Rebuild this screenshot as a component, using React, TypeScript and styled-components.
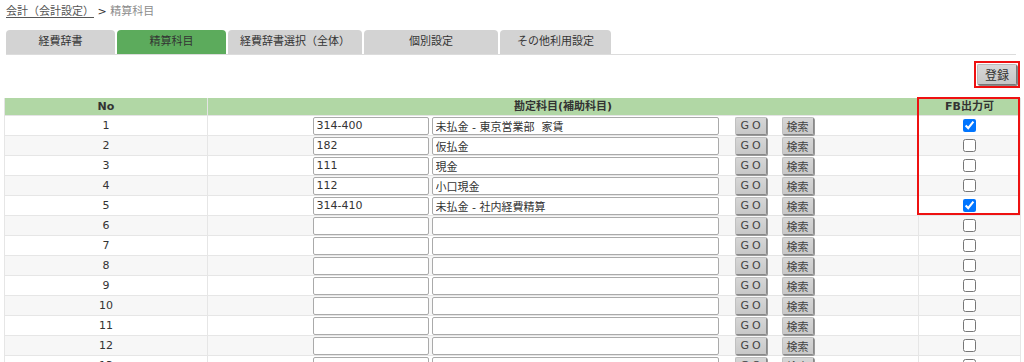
import React from "react";
import styled, { createGlobalStyle } from "styled-components";

const GlobalStyle = createGlobalStyle`
  html, body { margin: 0; padding: 0; background: #fff; }
  body {
    font-family: "DejaVu Sans", "Noto Sans CJK JP", sans-serif;
    font-size: 11px;
    color: #333;
  }
`;

const Page = styled.div`
  padding: 0 4px;
  width: 1016px;
`;

const Breadcrumb = styled.div`
  padding: 4px 0 0 2px;
  height: 20px;
  line-height: 16px;
  font-size: 11px;
  color: #333;
`;

const CrumbLink = styled.a`
  color: #555;
  text-decoration: underline;
  text-underline-offset: 2px;
`;

const CrumbCurrent = styled.span`
  color: #8c8c8c;
`;

const TabBar = styled.div`
  display: flex;
  gap: 2px;
  margin: 6px 4px 0 2px;
  border-bottom: 1px solid #dcdcdc;
`;

const Tab = styled.div<{ $active?: boolean; $w: number }>`
  width: ${(p) => p.$w}px;
  height: 24px;
  line-height: 24px;
  text-align: center;
  border-radius: 4px 4px 0 0;
  background: ${(p) => (p.$active ? "#5cab5c" : "#d3d3d3")};
  color: #333;
  font-size: 11px;
`;

const Toolbar = styled.div`
  display: flex;
  justify-content: flex-end;
  padding: 6px 0 10px;
`;

const Highlight = styled.div`
  border: 2px solid #ee1111;
  padding: 1px;
  display: inline-flex;
`;

const RegisterButton = styled.button`
  width: 40px;
  height: 21px;
  padding: 0;
  font-family: inherit;
  font-size: 12px;
  color: #333;
  background: linear-gradient(#d8d8d8, #c6c6c6);
  border: 1px solid #bbb;
  border-right-color: #777;
  border-bottom-color: #777;
  box-shadow: 1px 1px 0 #888;
  border-radius: 2px;
`;

const TableWrap = styled.div`
  position: relative;
  width: 1016px;
`;

const Table = styled.table`
  width: 1016px;
  border-collapse: collapse;
  table-layout: fixed;
`;

const Th = styled.th`
  background: #b1d7a5;
  height: 17px;
  padding: 0;
  font-weight: bold;
  font-size: 11px;
  color: #333;
  border: 1px solid #e4e4e4;
  border-top: 0;
  line-height: 16px;
`;

const Tr = styled.tr<{ $alt: boolean }>`
  background: ${(p) => (p.$alt ? "#f7f7f7" : "#fff")};
`;

const Td = styled.td`
  height: 19px;
  padding: 0;
  text-align: center;
  border: 1px solid #e6e6e6;
  font-size: 11px;
  color: #333;
`;

const SubjectCell = styled.div`
  display: flex;
  justify-content: center;
  align-items: center;
  height: 19px;
`;

const TextInput = styled.input<{ $w: number; $ml?: number }>`
  box-sizing: border-box;
  width: ${(p) => p.$w}px;
  height: 18px;
  margin: 0 0 0 ${(p) => p.$ml ?? 0}px;
  padding: 0 3px;
  font-family: inherit;
  font-size: 11px;
  color: #333;
  background: #fff;
  border: 1px solid #aaa;
  border-radius: 2px;
  outline: none;
`;

const SmallButton = styled.button<{ $ml: number; $spaced?: boolean }>`
  box-sizing: border-box;
  width: 32px;
  height: 18px;
  margin: 0 0 0 ${(p) => p.$ml}px;
  padding: 0;
  font-family: inherit;
  font-size: 11px;
  letter-spacing: ${(p) => (p.$spaced ? "3px" : "0")};
  text-indent: ${(p) => (p.$spaced ? "3px" : "0")};
  color: #444;
  background: linear-gradient(#d6d6d6, #c8c8c8);
  border: 1px solid #c0c0c0;
  border-right-color: #888;
  border-bottom-color: #888;
  box-shadow: 1px 1px 0 #999;
  border-radius: 2px;
`;

const Check = styled.input`
  margin: 3px 0 0;
  width: 13px;
  height: 13px;
`;

const RedFrame = styled.div`
  position: absolute;
  left: 913px;
  top: -1px;
  width: 103px;
  height: 118px;
  box-sizing: border-box;
  border: 2px solid #ee1111;
  pointer-events: none;
`;

type Row = { code: string; name: string; fb: boolean };

const data: Row[] = [
  { code: "314-400", name: "未払金 - 東京営業部  家賃", fb: true },
  { code: "182", name: "仮払金", fb: false },
  { code: "111", name: "現金", fb: false },
  { code: "112", name: "小口現金", fb: false },
  { code: "314-410", name: "未払金 - 社内経費精算", fb: true },
];

const rows: Row[] = Array.from({ length: 15 }, (_, i) => data[i] ?? { code: "", name: "", fb: false });

const tabs = [
  { label: "経費辞書", w: 109 },
  { label: "精算科目", w: 109, active: true },
  { label: "経費辞書選択（全体）", w: 134 },
  { label: "個別設定", w: 134 },
  { label: "その他利用設定", w: 111 },
];

export default function App() {
  return (
    <>
      <GlobalStyle />
      <Page>
        <Breadcrumb>
          <CrumbLink>会計（会計設定）</CrumbLink> &gt; <CrumbCurrent>精算科目</CrumbCurrent>
        </Breadcrumb>
        <TabBar>
          {tabs.map((t) => (
            <Tab key={t.label} $w={t.w} $active={t.active}>
              {t.label}
            </Tab>
          ))}
        </TabBar>
        <Toolbar>
          <Highlight>
            <RegisterButton>登録</RegisterButton>
          </Highlight>
        </Toolbar>
        <TableWrap>
          <Table>
            <colgroup>
              <col style={{ width: 203 }} />
              <col style={{ width: 711 }} />
              <col style={{ width: 102 }} />
            </colgroup>
            <thead>
              <tr>
                <Th>No</Th>
                <Th>勘定科目(補助科目)</Th>
                <Th>FB出力可</Th>
              </tr>
            </thead>
            <tbody>
              {rows.map((r, i) => (
                <Tr key={i} $alt={i % 2 === 1}>
                  <Td>{i + 1}</Td>
                  <Td>
                    <SubjectCell>
                      <TextInput $w={116} defaultValue={r.code} />
                      <TextInput $w={287} $ml={3} defaultValue={r.name} />
                      <SmallButton $ml={16} $spaced>GO</SmallButton>
                      <SmallButton $ml={15}>検索</SmallButton>
                    </SubjectCell>
                  </Td>
                  <Td>
                    <Check type="checkbox" defaultChecked={r.fb} />
                  </Td>
                </Tr>
              ))}
            </tbody>
          </Table>
          <RedFrame />
        </TableWrap>
      </Page>
    </>
  );
}
